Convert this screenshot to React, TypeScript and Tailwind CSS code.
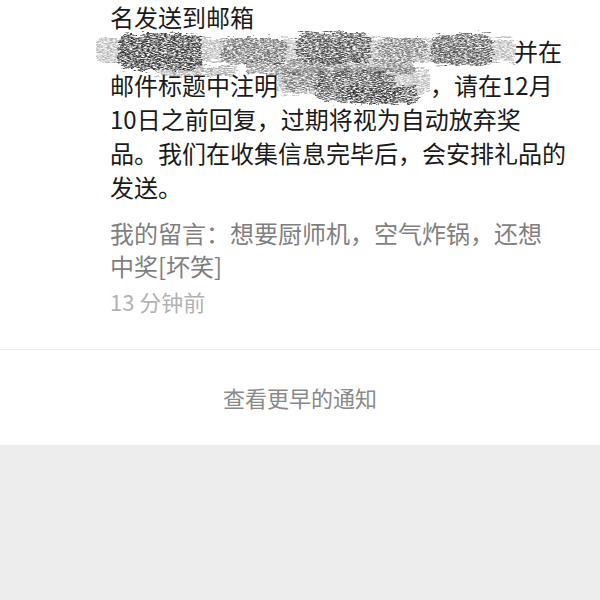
import React from 'react'

// redaction scribble drawn over the text
function Scribble({ w, h, seed, blobs }: { w: number; h: number; seed: number; blobs: { x: number; y: number; w: number; h: number; o: number }[] }) {
  const id = `scr${seed}`
  return (
    <svg width={w} height={h} viewBox={`0 0 ${w} ${h}`} className="block">
      <defs>
        <filter id={id} x="-10%" y="-30%" width="120%" height="160%">
          <feTurbulence type="fractalNoise" baseFrequency="0.08 0.4" numOctaves="3" seed={seed} result="n" />
          <feDisplacementMap in="SourceGraphic" in2="n" scale="12" xChannelSelector="R" yChannelSelector="G" result="d" />
          <feTurbulence type="fractalNoise" baseFrequency="0.35 1.2" numOctaves="2" seed={seed + 11} result="g" />
          <feColorMatrix in="g" type="matrix" values="0 0 0 0 0  0 0 0 0 0  0 0 0 0 0  2.6 0 0 0 -0.7" result="ga" />
          <feComposite in="d" in2="ga" operator="in" result="c" />
          <feGaussianBlur in="c" stdDeviation="0.4" />
        </filter>
      </defs>
      <g filter={`url(#${id})`}>
        {blobs.map((b, i) => (
          <rect key={i} x={b.x} y={b.y} width={b.w} height={b.h} rx={b.h / 3} fill="#333" opacity={b.o} />
        ))}
      </g>
    </svg>
  )
}

export default function App() {
  return (
    <div className="w-[600px] h-[600px] bg-[#ededed]" style={{ fontFamily: '"Noto Sans CJK SC", "Noto Sans", sans-serif' }}>
      <div className="bg-white">
        <div className="pl-[110px] pr-5 pb-[31px]">
          <div className="relative text-[24px] leading-[34px] text-[#1a1a1a]">
            <div>名发送到邮箱</div>
            <div className="flex">
              <span className="w-[404px]" />
              <span>并在</span>
            </div>
            <div className="flex">
              <span>邮件标题中注明</span>
              <span className="w-[152px]" />
              <span>，请在12月</span>
            </div>
            <div>10日之前回复，过期将视为自动放弃奖</div>
            <div>品。我们在收集信息完毕后，会安排礼品的</div>
            <div>发送。</div>

            <div className="absolute left-[-14px] top-[26px]">
              <Scribble
                w={420}
                h={56}
                seed={3}
                blobs={[
                  { x: 0, y: 12, w: 420, h: 24, o: 0.35 },
                  { x: 22, y: 8, w: 85, h: 36, o: 0.95 },
                  { x: 125, y: 12, w: 65, h: 26, o: 0.55 },
                  { x: 200, y: 6, w: 75, h: 32, o: 0.8 },
                  { x: 282, y: 12, w: 48, h: 22, o: 0.45 },
                  { x: 335, y: 8, w: 62, h: 32, o: 0.75 },
                  { x: 150, y: 34, w: 170, h: 14, o: 0.55 },
                  { x: 60, y: 40, w: 80, h: 10, o: 0.4 },
                ]}
              />
            </div>
            <div className="absolute left-[166px] top-[60px]">
              <Scribble
                w={154}
                h={52}
                seed={7}
                blobs={[
                  { x: 0, y: 8, w: 154, h: 26, o: 0.35 },
                  { x: 40, y: 12, w: 80, h: 30, o: 0.75 },
                  { x: 70, y: 26, w: 72, h: 18, o: 0.9 },
                  { x: 8, y: 14, w: 40, h: 16, o: 0.45 },
                ]}
              />
            </div>
          </div>

          <div className="mt-3 text-[24px] leading-[33px] text-[#7f7f7f]">
            <div>我的留言：想要厨师机，空气炸锅，还想</div>
            <div>中奖[坏笑]</div>
          </div>

          <div className="mt-[2px] text-[22px] leading-[34px] text-[#b2b2b2]">13 分钟前</div>
        </div>

        <div className="h-[96px] border-t border-[#ececec] flex items-center justify-center text-[22px] text-[#8a8a8a]">
          查看更早的通知
        </div>
      </div>
    </div>
  )
}
